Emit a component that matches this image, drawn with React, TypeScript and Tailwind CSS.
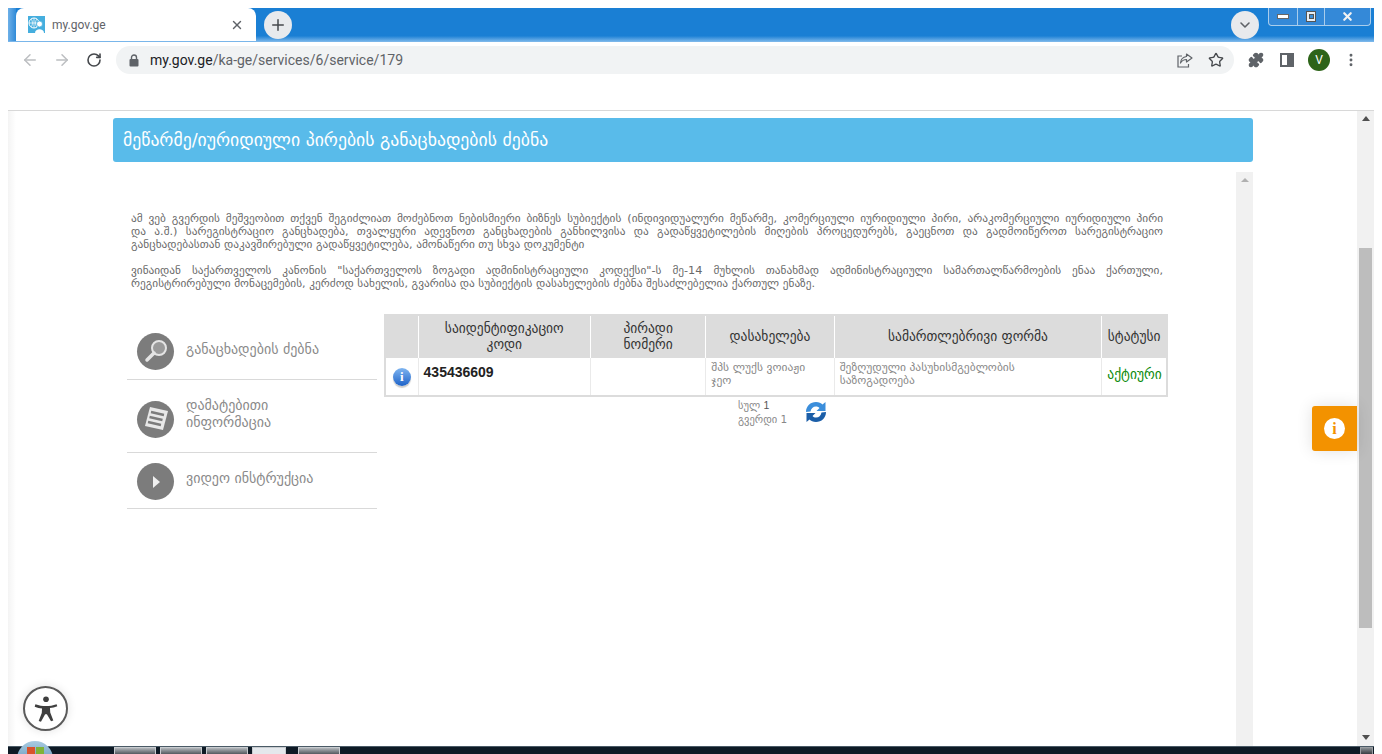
import { ArrowLeft, ArrowRight, RotateCw, Star, Puzzle, ChevronDown, Plus, X, EllipsisVertical } from 'lucide-react'

const geo = 'font-["DejaVu_Sans",sans-serif]'

const columns = [33, 172, 115, 128, 267, 65]

function Favicon() {
  return (
    <svg width="17" height="17" viewBox="0 0 17 17">
      <rect width="17" height="17" fill="#45aede" />
      <circle cx="6" cy="7" r="5" fill="none" stroke="#fff" strokeWidth="1" />
      <path d="M1 7h10M6 2v10M3 3c2 2 2 6 0 8M9 3c-2 2-2 6 0 8" stroke="#fff" strokeWidth="0.7" fill="none" />
      <circle cx="11.500" cy="8" r="3" fill="#fff" stroke="#45aede" strokeWidth="0.8" />
      <path d="M7 17c0-5 9-5 9 0z" fill="#fff" />
    </svg>
  )
}

function WindowControls() {
  return (
    <div className="flex h-[18px] w-[103px] ml-[9px] mr-[3px] border border-t-0 border-[#a9cdec] rounded-b-[4px] bg-[#3489d8]">
      <div className="w-[29px] border-r border-[#a9cdec] flex items-center justify-center">
        <div className="w-[12px] h-[5px] bg-white border border-[#666]" />
      </div>
      <div className="w-[27px] border-r border-[#a9cdec] flex items-center justify-center">
        <div className="w-[10px] h-[11px] bg-[#e8eef4] border border-[#555] flex items-center justify-center">
          <div className="w-[5px] h-[5px] bg-[#3d8fd8] border border-[#555]" />
        </div>
      </div>
      <div className="flex-1 flex items-center justify-center">
        <X size={13} strokeWidth={4} className="text-[#f2f2f2]" />
      </div>
    </div>
  )
}

function PageScrollbar() {
  return (
    <div className="w-[17px] shrink-0 bg-[#f1f1f1] flex flex-col items-center">
      <div className="mt-[5px] w-0 h-0 border-x-[4px] border-x-transparent border-b-[5px] border-b-[#505050]" />
      <div className="mt-[127px] w-[13px] h-[380px] bg-[#bdbdbd]" />
      <div className="mt-auto mb-[6px] w-0 h-0 border-x-[4px] border-x-transparent border-t-[5px] border-t-[#505050]" />
    </div>
  )
}

function MenuRow({ icon, label, height, labelClass }: { icon: React.ReactNode; label: string; height: string; labelClass: string }) {
  return (
    <div className={`${height} flex items-center gap-[12px] pl-[10px] border-b border-[#d9d9d9]`}>
      {icon}
      <span className={`${geo} ${labelClass} text-[14px] leading-[17px] text-[#8a8a8a] w-[150px]`}>{label}</span>
    </div>
  )
}

export default function App() {
  return (
    <div className="w-[1382px] h-[754px] bg-white overflow-hidden flex flex-col pt-2 px-2 font-['Liberation_Sans',sans-serif] relative">
      {/* browser tab strip */}
      <div className="h-[34px] shrink-0 flex items-start bg-[linear-gradient(to_bottom,#1a7fd4_82%,#82bbec_100%)]">
        <div className="w-[8px] h-[33px] bg-gradient-to-r from-[#6db0e8] to-[#2f8bd8]" />
        <div className="w-[240px] h-[33px] bg-white rounded-t-[8px] flex items-center pl-[12px] pr-[12px]">
          <Favicon />
          <span className="ml-[7px] text-[12px] text-[#5f6368] font-['Roboto',sans-serif]">my.gov.ge</span>
          <X size={14} strokeWidth={2.4} className="ml-auto text-[#5f6368]" />
        </div>
        <div className="ml-[8px] mt-[3px] w-[28px] h-[28px] rounded-full bg-[#e8eaed] flex items-center justify-center">
          <Plus size={18} strokeWidth={2} className="text-[#45484c]" />
        </div>
        <div className="ml-auto mt-[3px] w-[28px] h-[28px] rounded-full bg-[#e8eaed] flex items-center justify-center">
          <ChevronDown size={16} strokeWidth={2.4} className="text-[#5f6368]" />
        </div>
        <WindowControls />
      </div>

      {/* toolbar */}
      <div className="h-[36px] shrink-0 flex items-start pt-[4px] bg-white">
        <div className="flex items-center h-[28px] w-[108px] text-[#bcbec1]">
          <ArrowLeft size={18} strokeWidth={2} className="ml-[13px]" />
          <ArrowRight size={18} strokeWidth={2} className="ml-[14px]" />
          <RotateCw size={16} strokeWidth={2.4} className="ml-[15px] text-[#45484c]" />
        </div>
        <div className="w-[1118px] h-[28px] rounded-full bg-[#f1f3f4] flex items-center pl-[13px] pr-[10px]">
          <svg width="10" height="13" viewBox="0 0 10 13" className="shrink-0">
            <path d="M2.500 5V3.500a2.500 2.500 0 0 1 5 0V5" fill="none" stroke="#5f6368" strokeWidth="1.400" />
            <rect x="0.500" y="5" width="9" height="7.500" rx="1" fill="#5f6368" />
          </svg>
          <span className="ml-[11px] text-[14px] font-['Roboto',sans-serif] text-[#5f6368]">
            <span className="text-[#202124]">my.gov.ge</span>/ka-ge/services/6/service/179
          </span>
          <svg width="16" height="15" viewBox="0 0 16 15" fill="none" stroke="#5f6368" strokeWidth="1.200" className="ml-auto shrink-0">
            <path d="M5 3H1v11h10.500v-3" />
            <path d="M9.500 1l5.500 4-5.500 4V6.500C7 6.500 5 7.500 3.500 10c.3-3.500 2.500-6 6-6.500z" strokeLinejoin="round" />
          </svg>
          <Star size={16} strokeWidth={2} className="ml-[15px] text-[#45484c]" />
        </div>
        <div className="flex items-center h-[28px] text-[#5f6368]">
          <Puzzle size={16} strokeWidth={2} className="ml-[14px] fill-[#5f6368]" />
          <div className="ml-[16px] w-[14px] h-[14px] border-[2px] border-[#5f6368] flex justify-end">
            <div className="w-[5px] bg-[#5f6368]" />
          </div>
          <div className="ml-[14px] w-[22px] h-[22px] rounded-full bg-[#2d6419] text-white text-[12px] flex items-center justify-center font-['Roboto',sans-serif]">
            V
          </div>
          <EllipsisVertical size={16} strokeWidth={2.4} className="ml-[13px]" />
        </div>
      </div>

      {/* page */}
      <div className="h-[33px] shrink-0 border-b border-[#d8d8d8]" />
      <div className="flex-1 min-h-0 flex bg-gradient-to-r from-[#f4f4f4] to-white bg-[length:8px_100%] bg-no-repeat">
        <main className="flex-1 min-w-0 pt-[7px] pl-[105px]">
          <div className="w-[1140px] h-[44px] rounded-[3px] bg-[#59bbea] flex items-center pl-[10px]">
            <h1 className={`${geo} text-[17.700px] text-white font-normal`}>
              მეწარმე/იურიდიული პირების განაცხადების ძებნა
            </h1>
          </div>
          <div className="w-[1140px] h-[574px] mt-[10px] flex">
            <div className="flex-1 min-w-0">
              <div className={`${geo} pt-[40px] pl-[18px] w-[1050px] text-[11.300px] leading-[13px] text-[#6a6a6a] text-justify`}>
                <p>
                  ამ ვებ გვერდის მეშვეობით თქვენ შეგიძლიათ მოძებნოთ ნებისმიერი ბიზნეს სუბიექტის (ინდივიდუალური მეწარმე, კომერციული იურიდიული პირი, არაკომერციული იურიდიული პირი და{'\u00a0'}ა.შ.) სარეგისტრაციო განცხადება, თვალყური ადევნოთ განცხადების განხილვისა და გადაწყვეტილების მიღების პროცედურებს, გაეცნოთ და გადმოიწეროთ სარეგისტრაციო განცხადებასთან დაკავშირებული გადაწყვეტილება, ამონაწერი თუ სხვა დოკუმენტი
                </p>
                <p className="mt-[13px]">
                  ვინაიდან საქართველოს კანონის "საქართველოს ზოგადი ადმინისტრაციული კოდექსი"-ს მე-14 მუხლის თანახმად ადმინისტრაციული სამართალწარმოების ენაა ქართული, რეგისტრირებული მონაცემების, კერძოდ სახელის, გვარისა და სუბიექტის დასახელების ძებნა შესაძლებელია ქართულ ენაზე.
                </p>
              </div>
              <div className="flex mt-[24px] pl-[14px]">
                <div className="w-[250px] shrink-0 pt-[1px]">
                  <MenuRow
                    height="h-[65px]"
                    labelClass="mt-[4px]"
                    label="განაცხადების ძებნა"
                    icon={
                      <div className="w-[37px] h-[37px] rounded-full bg-[#7c7c7c] flex items-center justify-center shrink-0 mt-[8px]">
                        <svg width="28" height="28" viewBox="0 0 28 28" className="shrink-0">
                          <circle cx="17" cy="11" r="7" fill="#9a9a9a" stroke="#e4e4e4" strokeWidth="2" />
                          <path d="M12 16L5 23" stroke="#e4e4e4" strokeWidth="3.500" strokeLinecap="round" />
                        </svg>
                      </div>
                    }
                  />
                  <MenuRow
                    height="h-[73px]"
                    labelClass="-mt-[4px]"
                    label="დამატებითი ინფორმაცია"
                    icon={
                      <div className="w-[37px] h-[37px] rounded-full bg-[#7c7c7c] flex items-center justify-center shrink-0 mt-[6px]">
                        <svg width="30" height="30" viewBox="0 0 30 30" className="shrink-0">
                          <path d="M9 3l18 4-5 19L4 22z" fill="#e8e8e8" />
                          <path d="M10 8l13 3M8.500 13l13 3M7 18l13 3" stroke="#7c7c7c" strokeWidth="2.400" />
                        </svg>
                      </div>
                    }
                  />
                  <MenuRow
                    height="h-[56px]"
                    labelClass="-mt-[4px]"
                    label="ვიდეო ინსტრუქცია"
                    icon={
                      <div className="w-[37px] h-[37px] rounded-full bg-[#7c7c7c] flex items-center justify-center shrink-0 mt-[2px]">
                        <div className="ml-[2px] w-0 h-0 border-y-[6px] border-y-transparent border-l-[7px] border-l-[#efefef]" />
                      </div>
                    }
                  />
                </div>
                <div className="ml-[7px] w-[784px] shrink-0">
                  <table className="table-fixed border-collapse w-[784px] border-2 border-[#dcdcdc]">
                    <colgroup>
                      {columns.map((w) => (
                        <col key={w} style={{ width: w }} />
                      ))}
                    </colgroup>
                    <thead>
                      <tr className={`${geo} h-[43px] bg-[#dcdcdc] text-[13.500px] leading-[16px] text-[#333]`}>
                        <th className="border-r border-white" />
                        <th className="border-r border-white font-normal px-[20px] pb-[2px]">საიდენტიფიკაციო კოდი</th>
                        <th className="border-r border-white font-normal px-[20px] pb-[2px]">პირადი ნომერი</th>
                        <th className="border-r border-white font-normal pb-[2px]">დასახელება</th>
                        <th className="border-r border-white font-normal pb-[2px]">სამართლებრივი ფორმა</th>
                        <th className="font-normal pb-[2px]">სტატუსი</th>
                      </tr>
                    </thead>
                    <tbody>
                      <tr className="h-[38px]">
                        <td className="border-r border-[#eaeaea] align-middle">
                          <div className="flex justify-center">
                            <div className="w-[18px] h-[18px] rounded-full bg-gradient-to-b from-[#7fb5f0] to-[#1c62c8] shadow-[0_2px_1px_rgba(0,0,0,0.2)] text-white text-[13px] font-bold leading-[18px] text-center font-['Liberation_Serif',serif]">
                              i
                            </div>
                          </div>
                        </td>
                        <td className="border-r border-[#eaeaea] align-top pl-[5px] pt-[5px] text-[14px] leading-[18px] font-bold text-[#222]">435436609</td>
                        <td className="border-r border-[#eaeaea]" />
                        <td className={`${geo} border-r border-[#eaeaea] pl-[5px] pr-[10px] pb-[5px] text-[11.500px] leading-[13px] text-[#888]`}>შპს ლუქს ვოიაჟი ჯეო</td>
                        <td className={`${geo} border-r border-[#eaeaea] pl-[5px] pr-[40px] pb-[5px] text-[11.500px] leading-[13px] text-[#888]`}>შეზღუდული პასუხისმგებლობის საზოგადოება</td>
                        <td className={`${geo} pl-[5px] pb-[5px] text-[13.500px] text-[#0a8a0a]`}>აქტიური</td>
                      </tr>
                    </tbody>
                  </table>
                  <div className="flex items-start mt-[1px] pl-[354px]">
                    <div className={`${geo} text-[10.500px] leading-[14px] text-[#888] w-[67px]`}>
                      <div>სულ <span className="font-['Liberation_Sans',sans-serif] text-[#555]">1</span></div>
                      <div>გვერდი 1</div>
                    </div>
                    <svg width="22" height="24" viewBox="0 0 22 24" className="mt-[2px] shrink-0">
                      <path d="M1 12C1 6 5.500 2 11 2c3 0 5 1 6.500 2.500L20.500 2v9h-9l3-3c-1-1-2-1.500-3.500-1.500-3 0-5 2-5.500 5z" fill="#3b8edb" />
                      <path d="M21 12c0 6-4.500 10-10 10-3 0-5-1-6.500-2.500L1.500 22v-9h9l-3 3c1 1 2 1.500 3.500 1.500 3 0 5-2 5.500-5z" fill="#1b5ea8" />
                    </svg>
                  </div>
                </div>
              </div>
            </div>
            {/* inner panel scrollbar */}
            <div className="w-[17px] shrink-0 bg-[#f1f1f1] flex flex-col items-center">
              <div className="mt-[6px] w-0 h-0 border-x-[4px] border-x-transparent border-b-[4px] border-b-[#b0b0b0]" />
            </div>
          </div>
        </main>
        <PageScrollbar />
      </div>

      {/* windows taskbar */}
      <div className="h-[8px] shrink-0 bg-[#0e1a25] border-t border-[#4a5a66] flex items-start overflow-hidden">
        <div className="ml-[106px] flex gap-[4px]">
          <div className="w-[42px] h-[8px] bg-gradient-to-b from-[#b4b8bc] to-[#555a60] border border-[#c8ccd0]" />
          <div className="w-[42px] h-[8px] bg-gradient-to-b from-[#b4b8bc] to-[#555a60] border border-[#c8ccd0]" />
          <div className="w-[42px] h-[8px] bg-gradient-to-b from-[#b4b8bc] to-[#555a60] border border-[#c8ccd0]" />
          <div className="w-[34px] h-[8px] bg-[#e4e8ec] border border-[#c8ccd0]" />
          <div className="ml-[8px] w-[42px] h-[8px] bg-gradient-to-b from-[#b4b8bc] to-[#555a60] border border-[#c8ccd0]" />
        </div>
        <div className="ml-auto mr-[1px] w-[13px] h-[8px] bg-gradient-to-b from-[#8a8f94] to-[#3a3f44] border border-[#9a9ea2]" />
      </div>

      {/* overlays */}
      <div className="absolute left-[17px] top-[741px] w-[36px] h-[36px] rounded-full bg-gradient-to-b from-[#a9cbe0] to-[#3d7ca8] flex justify-center pt-[6px]">
        <div className="w-[8px] h-[8px] bg-[#d9532c] mr-[1px]" />
        <div className="w-[8px] h-[8px] bg-[#7fb338]" />
      </div>
      <div className="absolute left-[1312px] top-[406px] w-[45px] h-[45px] rounded-l-[3px] bg-[#f39200] shadow-[0_0_16px_rgba(0,0,0,0.12)] flex items-center justify-center">
        <div className="w-[21px] h-[21px] rounded-full bg-white flex items-center justify-center text-[#f39200] text-[16px] font-bold font-['Liberation_Serif',serif]">
          i
        </div>
      </div>
      <div className="absolute left-[23px] top-[686px] w-[45px] h-[45px] rounded-full bg-white border-2 border-[#5a5a5a] shadow-[0_0_10px_rgba(0,0,0,0.12)] flex items-center justify-center">
        <svg width="30" height="30" viewBox="0 0 34 34" fill="#3f3f3f" className="shrink-0">
          <circle cx="17" cy="6" r="3.200" />
          <path d="M5 11.500c4 1.500 8 2 12 2s8-.5 12-2l.8 2.400c-2.800 1.200-5.600 1.800-8.300 2.100l.3 5 3.500 9-2.600 1L18 23h-2l-4.700 8.500-2.600-1 3.500-9 .3-5c-2.700-.3-5.500-.9-8.300-2.100z" />
        </svg>
      </div>
    </div>
  )
}
